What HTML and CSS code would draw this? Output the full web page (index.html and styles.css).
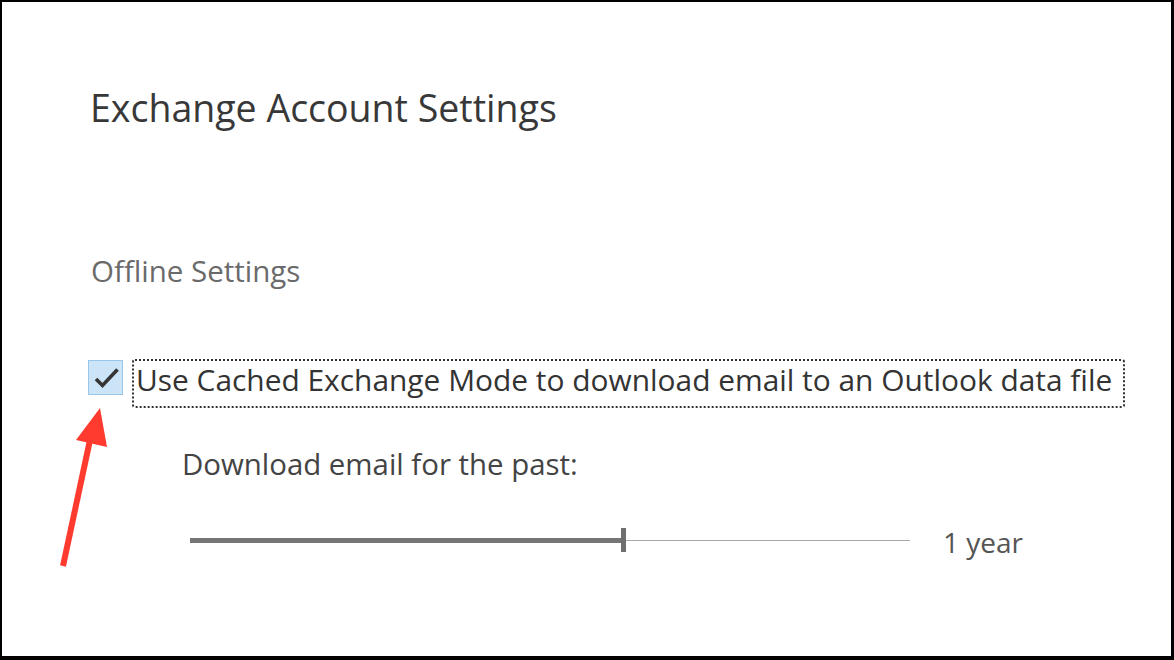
FILE: index.html
```html
<!DOCTYPE html>
<html lang="en">
<head>
  <meta charset="UTF-8">
  <title>Exchange Account Settings</title>
  <link rel="stylesheet" href="styles.css">
</head>
<body>

  <div class="frame">
    <!-- Heading -->
    <h1 class="title">Exchange Account Settings</h1>

    <!-- Offline Settings -->
    <h2 class="section">Offline Settings</h2>

    <div class="option">
      <span class="check">
        <svg width="35" height="35" viewBox="0 0 35 35">
          <path d="M8 19 L14.5 25.5 L29.5 9.5" fill="none" stroke="#353535" stroke-width="3.6"/>
        </svg>
      </span>
      <span class="focus">Use Cached Exchange Mode to download email to an Outlook data file</span>
    </div>

    <div class="sub">
      <div class="sub-label">Download email for the past:</div>
      <div class="slider-row">
        <div class="slider">
          <div class="fill"></div>
          <div class="thumb"></div>
          <div class="rest"></div>
        </div>
        <span class="value">1 year</span>
      </div>
    </div>

    <!-- Annotation arrow -->
    <svg class="arrow" width="60" height="170" viewBox="0 0 60 170">
      <line x1="23" y1="166" x2="50" y2="40" stroke="#ff3b30" stroke-width="6"/>
      <polygon points="60,8 36,40 67,47" fill="#ff3b30"/>
    </svg>
  </div>

</body>
</html>
```

FILE: styles.css
```css
body {
  margin: 0;
  padding: 0;
  background: #fff;
  font-family: 'Open Sans', 'Noto Sans', sans-serif;
}

.frame {
  position: relative;
  box-sizing: border-box;
  width: 1174px;
  height: 660px;
  border-top: 2px solid #000;
  border-left: 2px solid #000;
  border-right: 3px solid #000;
  border-bottom: 4px solid #000;
  padding: 0 0 0 88px;
}

.title {
  margin: 0;
  padding-top: 81px;
  font-size: 37.5px;
  font-weight: normal;
  color: #383838;
  line-height: 50px;
}

.section {
  margin: 118px 0 0 1px;
  font-size: 29.5px;
  font-weight: normal;
  color: #6a6a6a;
  line-height: 40px;
}

.option {
  display: flex;
  align-items: flex-start;
  gap: 9px;
  margin-top: 68px;
}

.check {
  box-sizing: border-box;
  width: 35px;
  height: 35px;
  margin: 1px 0 0 -2px;
  display: block;
  background: #cce4f7;
  border: 1px solid #98c6ea;
}

.check svg {
  display: block;
  margin: -1px;
}

.focus {
  padding: 1px 11px 8px 2px;
  border: 2px dotted #333;
  border-radius: 3px;
  font-size: 29.9px;
  line-height: 36px;
  color: #333;
}

.sub {
  padding-left: 92px;
  margin-top: 36px;
}

.sub-label {
  font-size: 29.4px;
  line-height: 40px;
  color: #444;
}

.slider-row {
  display: flex;
  align-items: center;
  gap: 33px;
  margin-top: 35px;
}

.slider {
  display: flex;
  align-items: center;
  width: 720px;
  height: 24px;
  margin-left: 8px;
}

.fill {
  width: 431px;
  height: 5px;
  background: #767676;
}

.thumb {
  width: 5px;
  height: 24px;
  background: #6f6f6f;
}

.rest {
  flex: 1;
  height: 1px;
  background: #a8a8a8;
}

.value {
  padding-top: 4px;
  font-size: 28px;
  color: #555;
}

.arrow {
  position: absolute;
  left: 38px;
  top: 398px;
  overflow: visible;
}
```
